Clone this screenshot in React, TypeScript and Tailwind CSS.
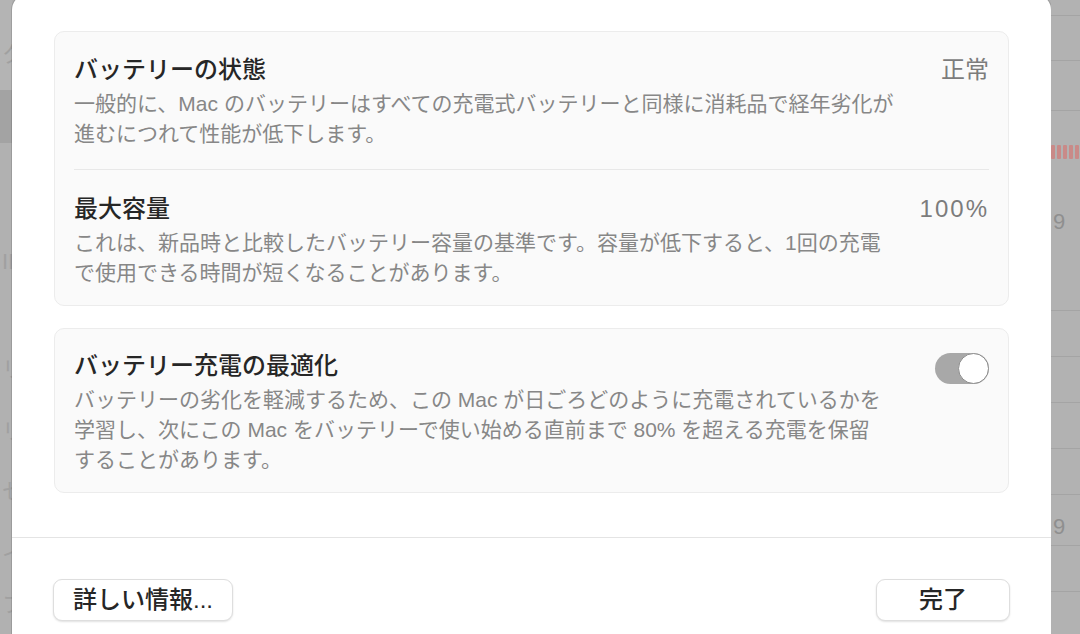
import React from 'react';

const font = { fontFamily: '"Liberation Sans", "Noto Sans CJK JP", sans-serif' };

const Toggle: React.FC<{ on: boolean }> = ({ on }) => (
    <div className={`mt-[2px] flex h-[31px] w-[54px] shrink-0 items-center rounded-full bg-[#a8a8a8] ${on ? 'justify-end' : 'justify-start'}`}>
        <div className="h-[31px] w-[31px] rounded-full border border-[#8e8e8e] bg-white" />
    </div>
);

const Row: React.FC<{ title: string; value?: React.ReactNode; lines: string[]; right?: React.ReactNode }> = ({ title, value, lines, right }) => (
    <div className="flex items-start justify-between">
        <div className="flex flex-col gap-[4px]">
            <div className="text-[24px] font-medium leading-[30px] text-[#262626]">{title}</div>
            <div className="text-[21px] leading-[30px] text-[#878787]">
                {lines.map((l) => (
                    <div key={l} className="whitespace-nowrap">{l}</div>
                ))}
            </div>
        </div>
        {value && <div className="text-[24px] leading-[30px] text-[#7c7c7c]">{value}</div>}
        {right}
    </div>
);

// blurred window behind the sheet, only a sliver shows on each side
const LeftStrip = () => (
    <div className="flex w-[12px] shrink-0 flex-col overflow-hidden text-[22px] leading-[22px] text-[#a0a0a0]">
        <div className="h-[90px] shrink-0 bg-[#b4b4b4] pt-[44px] pl-[2px]">ク</div>
        <div className="h-[53px] shrink-0 bg-[#a3a3a3]" />
        <div className="flex flex-1 flex-col bg-[#b1b1b1] pl-[2px]">
            <span className="mt-[108px] shrink-0">II</span>
            <span className="mt-[86px] shrink-0">リ</span>
            <span className="mt-[40px] shrink-0">リ</span>
            <span className="mt-[38px] shrink-0">セ</span>
            <span className="mt-[41px] shrink-0">イ</span>
            <span className="mt-[28px] shrink-0">フ</span>
        </div>
    </div>
);

const RightStrip = () => (
    <div className="flex flex-1 flex-col overflow-hidden bg-[#b2b2b2] text-[22px] leading-[40px] text-[#8f8f8f]">
        <div className="h-[16px] shrink-0 border-b border-[#a4a4a4]" />
        <div className="h-[45px] shrink-0 border-b border-[#a4a4a4]" />
        <div className="h-[50px] shrink-0 border-b border-[#a4a4a4]" />
        <div className="flex h-[49px] shrink-0 items-start gap-[2px] pt-[34px]">
            {[0, 1, 2, 3, 4].map((i) => (
                <div key={i} className="h-[14px] w-[4px] rounded-[1px] bg-[#c98a88]" />
            ))}
        </div>
        <div className="h-[151px] shrink-0 border-b border-[#a4a4a4] pt-[42px] pl-[2px]">9</div>
        <div className="h-[46px] shrink-0 border-b border-[#a4a4a4]" />
        <div className="h-[46px] shrink-0 border-b border-[#a4a4a4]" />
        <div className="h-[46px] shrink-0 border-b border-[#a4a4a4]" />
        <div className="h-[46px] shrink-0 border-b border-[#a4a4a4]" />
        <div className="h-[51px] shrink-0 border-b border-[#a4a4a4] pt-[12px] pl-[2px]">9</div>
        <div className="h-[46px] shrink-0 border-b border-[#a4a4a4]" />
    </div>
);

export default function App() {
    return (
        <div className="flex h-[634px] w-[1080px] overflow-hidden bg-[#b0b0b0]" style={font}>
            <LeftStrip />

            <div className="-mt-[6px] flex h-[660px] w-[1039px] shrink-0 flex-col rounded-t-[16px] bg-white shadow-[0_0_0_1px_rgba(0,0,0,0.12)]">
                <div className="flex flex-col px-[42px] pt-[37px]">
                    {/* Battery health + capacity */}
                    <div className="rounded-[10px] border border-[#ececec] bg-[#fafafa] px-[19px]">
                        <div className="pt-[23px] pb-[20px]">
                            <Row
                                title="バッテリーの状態"
                                value="正常"
                                lines={[
                                    '一般的に、Mac のバッテリーはすべての充電式バッテリーと同様に消耗品で経年劣化が',
                                    '進むにつれて性能が低下します。',
                                ]}
                            />
                        </div>
                        <div className="h-px bg-[#e8e8e8]" />
                        <div className="pt-[24px] pb-[17px]">
                            <Row
                                title="最大容量"
                                value={<span className="tracking-[2px]">100%</span>}
                                lines={[
                                    'これは、新品時と比較したバッテリー容量の基準です。容量が低下すると、1回の充電',
                                    'で使用できる時間が短くなることがあります。',
                                ]}
                            />
                        </div>
                    </div>

                    {/* Optimized charging */}
                    <div className="mt-[22px] rounded-[10px] border border-[#ececec] bg-[#fafafa] px-[19px] pt-[22px] pb-[17px]">
                        <Row
                            title="バッテリー充電の最適化"
                            lines={[
                                'バッテリーの劣化を軽減するため、この Mac が日ごろどのように充電されているかを',
                                '学習し、次にこの Mac をバッテリーで使い始める直前まで 80% を超える充電を保留',
                                'することがあります。',
                            ]}
                            right={<Toggle on />}
                        />
                    </div>
                </div>

                <div className="mt-[44px] h-px bg-[#e4e4e4]" />

                <div className="flex items-center justify-between px-[41px] pt-[41px]">
                    <button className="h-[42px] rounded-[9px] border border-[#dedede] bg-white px-[19px] text-[24px] font-medium leading-none text-[#262626] shadow-[0_1px_2px_rgba(0,0,0,0.12)]">
                        詳しい情報...
                    </button>
                    <button className="h-[42px] w-[134px] rounded-[9px] border border-[#dedede] bg-white text-[24px] font-medium leading-none text-[#262626] shadow-[0_1px_2px_rgba(0,0,0,0.12)]">
                        完了
                    </button>
                </div>
            </div>

            <RightStrip />
        </div>
    );
}
